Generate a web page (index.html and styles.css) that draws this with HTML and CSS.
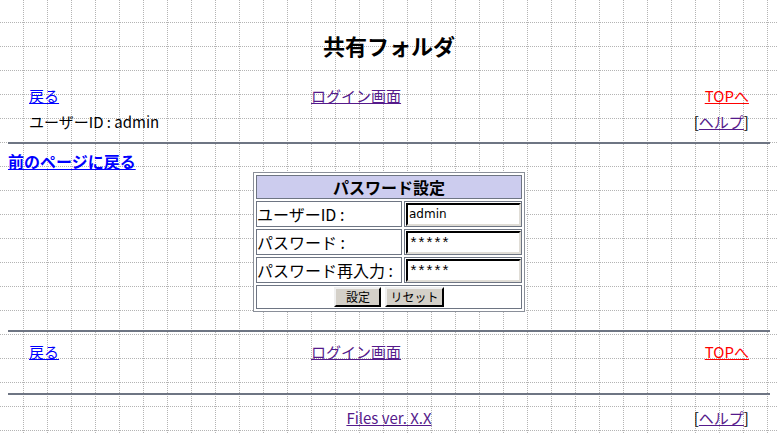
FILE: index.html
```html
<!DOCTYPE html>
<html lang="ja">
<head>
  <meta charset="UTF-8">
  <title>共有フォルダ</title>
  <link rel="stylesheet" href="styles.css">
</head>
<body>
  <h1 class="title">共有フォルダ</h1>

  <div class="nav">
    <div class="nav-row main">
      <a href="#" class="link">戻る</a>
      <a href="#" class="link visited mid">ログイン画面</a>
      <a href="#" class="link top end">TOPへ</a>
    </div>
    <div class="nav-row main">
      <span>ユーザーID : admin</span>
      <span class="end">[<a href="#" class="link visited">ヘルプ</a>]</span>
    </div>
  </div>

  <hr class="rule rule-top">

  <a href="#" class="link back">前のページに戻る</a>

  <form class="pw-form">
    <table class="pw-table">
      <tr>
        <th colspan="2">パスワード設定</th>
      </tr>
      <tr>
        <td class="label">ユーザーID :</td>
        <td class="field"><input type="text" value="admin"></td>
      </tr>
      <tr>
        <td class="label">パスワード :</td>
        <td class="field"><input type="text" class="masked" value="*****"></td>
      </tr>
      <tr>
        <td class="label">パスワード再入力 :</td>
        <td class="field"><input type="text" class="masked" value="*****"></td>
      </tr>
      <tr>
        <td colspan="2" class="buttons">
          <div class="btn-row">
            <button type="submit">設定</button>
            <button type="reset">リセット</button>
          </div>
        </td>
      </tr>
    </table>
  </form>

  <hr class="rule rule-mid">

  <div class="nav">
    <div class="nav-row main">
      <a href="#" class="link">戻る</a>
      <a href="#" class="link visited mid">ログイン画面</a>
      <a href="#" class="link top end">TOPへ</a>
    </div>
  </div>

  <hr class="rule rule-foot">

  <div class="nav">
    <div class="nav-row">
      <a href="#" class="link visited mid">Files ver. X.X</a>
      <span class="end">[<a href="#" class="link visited">ヘルプ</a>]</span>
    </div>
  </div>
</body>
</html>
```

FILE: styles.css
```css
body {
  margin: 8px 8px 0 8px;
  font-family: "Noto Sans CJK JP", "DejaVu Sans", sans-serif;
  font-size: 15px;
  color: #000;
  background-color: #fff;
  background-image: url("data:image/svg+xml,%3Csvg xmlns='http://www.w3.org/2000/svg' width='24' height='24'%3E%3Cpath d='M23.5 0V24M0 22.5H24' stroke='%23b4b4b4' stroke-dasharray='1 1' fill='none'/%3E%3C/svg%3E");
  background-position: 0 0;
}
.title {
  margin: 24px 0 0 0;
  font-size: 22px;
  line-height: 26px;
  text-align: center;
  font-weight: 700;
}
.nav {
  width: 95%;
  margin: 0 auto;
  padding: 0 2px;
  box-sizing: border-box;
}
.title + .nav {
  margin-top: 25px;
}
.nav-row {
  display: grid;
  grid-template-columns: 1fr auto 1fr;
  align-items: center;
  height: 26px;
  line-height: 26px;
}
.nav-row.main {
  grid-template-columns: 282px auto 1fr;
}
.nav-row > * {
  justify-self: start;
}
.nav-row > .mid {
  grid-column: 2;
  justify-self: center;
}
.nav-row > .end {
  grid-column: 3;
  justify-self: end;
}
.link {
  color: #0000ff;
  text-decoration: underline;
}
.link.visited {
  color: #551a8b;
}
.link.top {
  color: #ff0000;
}
.rule {
  border: none;
  border-top: 2px solid #6e7583;
  height: 0;
  margin: 0 -1px;
}
.rule-top {
  margin-top: 7px;
}
.back {
  display: inline-block;
  margin-top: 6px;
  font-size: 16px;
  font-weight: 700;
  line-height: 22px;
}
.pw-form {
  margin: 0;
  display: flex;
  justify-content: center;
}
.pw-table {
  border: 1px solid #8a8f99;
  border-spacing: 2px;
  background: #fff;
}
.pw-table th {
  background: #ccccee;
  border: 1px solid #6e7583;
  font-size: 16px;
  font-weight: 700;
  line-height: 22px;
  height: 22px;
  padding: 0;
}
.pw-table td {
  border: 1px solid #6e7583;
  padding: 0;
  vertical-align: middle;
}
.label {
  width: 144px;
  height: 24px;
  font-size: 16px;
  line-height: 24px;
  padding-left: 1px;
}
.field {
  width: 116px;
}
.field input {
  display: block;
  box-sizing: border-box;
  width: 115px;
  height: 23px;
  margin: 0 0 0 1px;
  padding: 0 1px;
  border: 2px inset #e0ddd6;
  border-top-color: #404040;
  border-left-color: #404040;
  font-family: "DejaVu Sans", sans-serif;
  font-size: 12px;
  color: #000;
}
.field input.masked {
  font-family: "Liberation Mono", monospace;
  font-size: 15px;
  padding-top: 4px;
  letter-spacing: -1px;
}
.buttons {
  height: 22px;
}
.btn-row {
  display: flex;
  justify-content: center;
  gap: 4px;
}
.buttons button {
  font-family: "Noto Sans CJK JP", sans-serif;
  font-size: 12px;
  min-width: 47px;
  height: 20px;
  padding: 0 3px;
  line-height: 14px;
  background: #d4d0c8;
  border: 2px outset #f0f0f0;
  border-right-color: #404040;
  border-bottom-color: #404040;
}
.rule-mid {
  margin-top: 18px;
}
.rule-mid + .nav {
  margin-top: 7px;
}
.rule-foot {
  margin-top: 28px;
}
.rule-foot + .nav {
  margin-top: 10px;
}
```
